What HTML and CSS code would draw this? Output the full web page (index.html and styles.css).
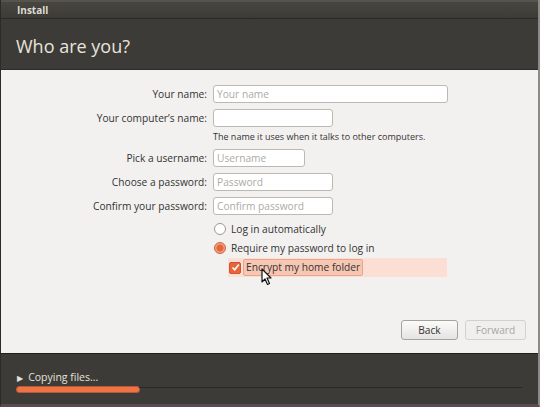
FILE: index.html
```html
<!DOCTYPE html>
<html lang="en">
    <head>
        <meta charset="UTF-8" />
        <title>Install</title>
        <link rel="stylesheet" href="styles.css">
    </head>
    <body>
        <div class="window">
            <div class="titlebar">Install</div>
            <div class="header">
                <h1>Who are you?</h1>
            </div>
            <div class="content">
                <div class="form">
                    <div class="row">
                        <label>Your name:</label>
                        <div class="input wide placeholder">Your name</div>
                    </div>
                    <div class="row">
                        <label>Your computer’s name:</label>
                        <div class="input mid"></div>
                    </div>
                    <div class="hint">The name it uses when it talks to other computers.</div>
                    <div class="row">
                        <label>Pick a username:</label>
                        <div class="input short placeholder">Username</div>
                    </div>
                    <div class="row">
                        <label>Choose a password:</label>
                        <div class="input mid placeholder">Password</div>
                    </div>
                    <div class="row">
                        <label>Confirm your password:</label>
                        <div class="input mid placeholder">Confirm password</div>
                    </div>
                    <div class="option first">
                        <span class="radio"></span>Log in automatically
                    </div>
                    <div class="option">
                        <span class="radio checked"></span>Require my password to log in
                    </div>
                    <div class="option sub">
                        <span class="check">
                            <svg width="9" height="9" viewBox="0 0 9 9"><path d="M1.5 4.5 L3.7 6.8 L7.8 1.6" fill="none" stroke="#fff" stroke-width="1.6"/></svg>
                        </span>
                        <span class="focus">Encrypt my home folder</span>
                        <svg class="cursor" width="12" height="18" viewBox="0 0 12 18"><path d="M1 1 L1 14 L4 11 L6.5 16.5 L8.5 15.5 L6 10 L10 10 Z" fill="#fff" stroke="#111" stroke-width="1.2" stroke-linejoin="round"/></svg>
                    </div>
                </div>
                <div class="buttons">
                    <div class="button">Back</div>
                    <div class="button disabled">Forward</div>
                </div>
            </div>
            <div class="footer">
                <div class="status"><span class="arrow">▶</span>Copying files...</div>
                <div class="progress">
                    <div class="bar" style="width: 122px"></div>
                    <div class="track"></div>
                </div>
            </div>
        </div>
    </body>
</html>
```
FILE: styles.css
```css
body {
    margin: 0;
    background: #3c3b37;
    font-family: "Open Sans", "DejaVu Sans", sans-serif;
}
.window {
    width: 540px;
    height: 407px;
    display: flex;
    flex-direction: column;
    background: #3c3b37;
    box-sizing: border-box;
    border-left: 1px solid #2c2b28;
    border-right: 2px solid #8d8a85;
    border-bottom: 3px solid #5c4a52;
}
.titlebar {
    height: 19px;
    box-sizing: border-box;
    border-top: 2px solid #56544f;
    border-bottom: 1px solid #2a2926;
    padding-left: 16px;
    line-height: 17px;
    font-size: 10px;
    font-weight: bold;
    color: #dfdbd2;
    background: linear-gradient(#47463f, #3c3b37);
}
.header {
    height: 50px;
    padding-left: 15px;
    box-sizing: border-box;
}
.header h1 {
    margin: 0;
    padding-top: 15px;
    font-size: 18px;
    font-weight: normal;
    color: #e8e4dc;
}
.content {
    height: 284px;
    background: #f2f1f0;
    border-top: 1px solid #2c2b28;
    box-sizing: border-box;
    display: flex;
    flex-direction: column;
    font-size: 10.2px;
    color: #333;
}
.form {
    padding-top: 15px;
    display: flex;
    flex-direction: column;
}
.row {
    display: flex;
    align-items: center;
    margin-bottom: 6px;
}
.row label {
    width: 206px;
    text-align: right;
    margin-right: 6px;
}
.input {
    height: 18px;
    box-sizing: border-box;
    border: 1px solid #bcb9b3;
    border-radius: 3px;
    background: #fff;
    padding-left: 3px;
    line-height: 16px;
}
.placeholder {
    color: #acaaa6;
}
.wide {
    width: 235px;
}
.mid {
    width: 120px;
}
.short {
    width: 92px;
}
.hint {
    margin: -3px 0 6px 212px;
    font-size: 9px;
    color: #333;
}
.option {
    display: flex;
    align-items: center;
    height: 19px;
    padding-left: 213px;
}
.option.first {
    margin-top: -2px;
}
.radio {
    width: 10px;
    height: 10px;
    border-radius: 50%;
    border: 1px solid #9a9893;
    background: #fff;
    margin-right: 5px;
}
.radio.checked {
    border-color: #c9643c;
    background: radial-gradient(circle, #e8653a 0 3px, #f1a083 4px);
}
.option.sub {
    margin-top: 1px;
    margin-left: 227px;
    padding-left: 1px;
    width: 218px;
    background: #fbdfd4;
    position: relative;
}
.check {
    width: 10px;
    height: 10px;
    border-radius: 2px;
    background: #e8653a;
    border: 1px solid #c9543a;
    display: flex;
    align-items: center;
    justify-content: center;
    margin-right: 2px;
}
.focus {
    background: #f7c7b4;
    border: 1px solid #eaa58b;
    border-radius: 2px;
    padding: 0 2px;
    line-height: 15px;
}
.cursor {
    position: absolute;
    left: 33px;
    top: 10px;
}
.buttons {
    margin-top: auto;
    margin-bottom: 13px;
    display: flex;
    justify-content: flex-end;
    gap: 7px;
    padding-right: 12px;
}
.button {
    height: 20px;
    box-sizing: border-box;
    border: 1px solid #a6a39e;
    border-radius: 3px;
    background: linear-gradient(#fbfbfa, #e6e4e1);
    line-height: 18px;
    text-align: center;
    width: 57px;
    color: #333;
}
.button.disabled {
    width: 61px;
    border-color: #d3d1cd;
    background: #f0efed;
    color: #a9a7a3;
}
.footer {
    flex: 1;
    padding: 16px 0 0 16px;
    border-top: 1px solid #1f1e1c;
}
.status {
    font-size: 10.5px;
    color: #e6e2da;
    display: flex;
    align-items: center;
}
.arrow {
    font-size: 8px;
    margin-right: 5px;
    color: #e6e2da;
}
.progress {
    display: flex;
    align-items: flex-start;
    margin-top: 3px;
}
.bar {
    height: 5px;
    border-radius: 3px;
    background: #ee7446;
    box-shadow: 0 0 0 1px #b8583a;
}
.track {
    flex: 1;
    height: 1px;
    margin-right: 16px;
    background: #2a2926;
}
```
